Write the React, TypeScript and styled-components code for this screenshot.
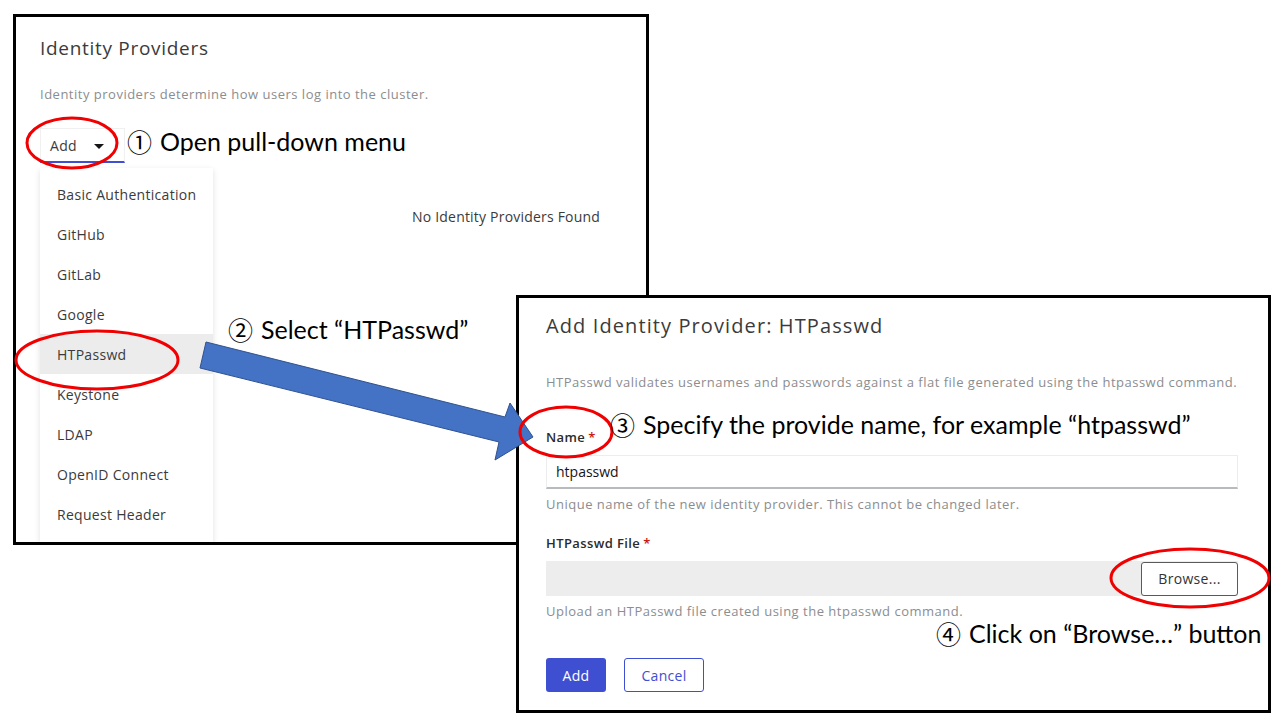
import React from "react";
import styled, { createGlobalStyle } from "styled-components";

const GlobalStyle = createGlobalStyle`
    html, body {
        margin: 0;
        padding: 0;
        background: #ffffff;
    }
    * {
        box-sizing: border-box;
    }
`;

const providers = [
    "Basic Authentication",
    "GitHub",
    "GitLab",
    "Google",
    "HTPasswd",
    "Keystone",
    "LDAP",
    "OpenID Connect",
    "Request Header",
];

const ui = `"Open Sans", "Liberation Sans", Arial, sans-serif`;
const note = `Lato, "Open Sans", sans-serif`;

const Step: React.FC<{ n: string; left: number; top: number; children: React.ReactNode }> = ({ n, left, top, children }) => (
    <Callout left={left} top={top}>
        <StepNumber>{n}</StepNumber>
        {children}
    </Callout>
);

const App: React.FC = () => {
    return (
        <Page>
            <GlobalStyle />

            <Window left={13} top={14} width={636} height={531}>
                <Title>Identity Providers</Title>
                <Description>Identity providers determine how users log into the cluster.</Description>
                <Toggle>
                    <span>Add</span>
                    <Caret />
                </Toggle>
                <EmptyState>No Identity Providers Found</EmptyState>
                <Menu>
                    {providers.map(name => (
                        <MenuItem key={name} $active={name === "HTPasswd"}>{name}</MenuItem>
                    ))}
                </Menu>
            </Window>

            <Window left={516} top={295} width={755} height={418} $wide>
                <Title $size={20}>Add Identity Provider: HTPasswd</Title>
                <Description $gap={35}>
                    HTPasswd validates usernames and passwords against a flat file generated using the htpasswd command.
                </Description>
                <Label $gap={37}>Name<Required>*</Required></Label>
                <TextInput>htpasswd</TextInput>
                <Helper>Unique name of the new identity provider. This cannot be changed later.</Helper>
                <Label $gap={21}>HTPasswd File<Required>*</Required></Label>
                <FileBar>
                    <BrowseButton>Browse...</BrowseButton>
                </FileBar>
                <Helper>Upload an HTPasswd file created using the htpasswd command.</Helper>
                <Actions>
                    <PrimaryButton>Add</PrimaryButton>
                    <SecondaryButton>Cancel</SecondaryButton>
                </Actions>
            </Window>

            <Overlay viewBox="0 0 1282 726" width={1282} height={726}>
                <polygon
                    points="206,342 505,417 510,403 533,437 495,460 499,442 200,368"
                    fill="#4472c4"
                    stroke="#2f528f"
                    strokeWidth={1}
                />
                <ellipse cx={72} cy={143} rx={45} ry={25} fill="none" stroke="#f00000" strokeWidth={3} />
                <ellipse cx={97} cy={360} rx={81} ry={29} fill="none" stroke="#f00000" strokeWidth={3} />
                <ellipse cx={566} cy={432} rx={46} ry={25} fill="none" stroke="#f00000" strokeWidth={3} />
                <ellipse cx={1190} cy={578} rx={79} ry={29} fill="none" stroke="#f00000" strokeWidth={3} />
            </Overlay>

            <Step n="①" left={127} top={128}>Open pull-down menu</Step>
            <Step n="②" left={228} top={316}>Select “HTPasswd”</Step>
            <Step n="③" left={610} top={411}>Specify the provide name, for example “htpasswd”</Step>
            <Step n="④" left={936} top={620}>Click on “Browse…” button</Step>
        </Page>
    );
};

const Page = styled.div`
    position: relative;
    width: 1282px;
    height: 726px;
    overflow: hidden;
    background: #ffffff;
    font-family: ${ui};
`;

const Window = styled.section<{ left: number; top: number; width: number; height: number; $wide?: boolean }>`
    position: absolute;
    left: ${p => p.left}px;
    top: ${p => p.top}px;
    width: ${p => p.width}px;
    height: ${p => p.height}px;
    border: 3px solid #000000;
    background: #ffffff;
    overflow: hidden;
    display: flex;
    flex-direction: column;
    align-items: flex-start;
    padding: ${p => (p.$wide ? "16px 30px 0 27px" : "19px 24px 0 24px")};
`;

const Title = styled.h1<{ $size?: number }>`
    margin: 0;
    font-size: ${p => p.$size ?? 19}px;
    line-height: 24px;
    font-weight: 400;
    letter-spacing: ${p => (p.$size ? 1.1 : 0.7)}px;
    color: #3b3b3b;
`;

const Description = styled.p<{ $gap?: number }>`
    margin: ${p => p.$gap ?? 25}px 0 0;
    font-size: 13px;
    line-height: 18px;
    letter-spacing: 0.5px;
    color: #8b8d8f;
`;

const Toggle = styled.div`
    margin-top: 25px;
    width: 85px;
    height: 35px;
    padding: 0 20px 0 9px;
    display: flex;
    align-items: center;
    justify-content: space-between;
    border: 1px solid #f0f0f0;
    border-bottom: 2px solid #3f4fd1;
    font-size: 14px;
    letter-spacing: 0.3px;
    color: #3b3b3b;
`;

const Caret = styled.span`
    width: 0;
    height: 0;
    margin-top: 2px;
    border-left: 5px solid transparent;
    border-right: 5px solid transparent;
    border-top: 5px solid #151515;
`;

const EmptyState = styled.div`
    margin: 45px 0 0 372px;
    font-size: 14px;
    line-height: 18px;
    letter-spacing: 0.2px;
    color: #3b3b3b;
`;

const Menu = styled.ul`
    position: absolute;
    left: 24px;
    top: 151px;
    width: 173px;
    margin: 0;
    padding: 6px 0 8px;
    list-style: none;
    background: #ffffff;
    box-shadow: 0 2px 6px rgba(0, 0, 0, 0.12);
`;

const MenuItem = styled.li<{ $active?: boolean }>`
    height: 40px;
    padding-left: 17px;
    display: flex;
    align-items: center;
    font-size: 14px;
    letter-spacing: 0.3px;
    color: #3b3b3b;
    background: ${p => (p.$active ? "#ececec" : "transparent")};
`;

const Label = styled.div<{ $gap: number }>`
    margin-top: ${p => p.$gap}px;
    font-size: 13px;
    line-height: 18px;
    font-weight: 600;
    letter-spacing: 0.4px;
    color: #2b2b2b;
`;

const Required = styled.span`
    margin-left: 3px;
    color: #c9190b;
`;

const TextInput = styled.div`
    margin-top: 9px;
    width: 100%;
    height: 34px;
    padding: 0 9px;
    display: flex;
    align-items: center;
    border: 1px solid #ededed;
    border-bottom: 2px solid #b8bbbe;
    font-size: 14px;
    color: #151515;
`;

const Helper = styled.div`
    margin-top: 6px;
    font-size: 13px;
    line-height: 18px;
    letter-spacing: 0.5px;
    color: #8b8d8f;
`;

const FileBar = styled.div`
    margin-top: 9px;
    width: 100%;
    height: 35px;
    display: flex;
    justify-content: flex-end;
    align-items: center;
    background: #ededed;
`;

const BrowseButton = styled.button`
    width: 97px;
    height: 34px;
    background: #ffffff;
    border: 1px solid #5a5a5a;
    border-radius: 3px;
    font-family: ${ui};
    font-size: 14px;
    letter-spacing: 0.3px;
    color: #333333;
`;

const Actions = styled.div`
    margin-top: 38px;
    display: flex;
    gap: 18px;
`;

const PrimaryButton = styled.button`
    width: 60px;
    height: 34px;
    border: none;
    border-radius: 3px;
    background: #3f4fd1;
    color: #ffffff;
    font-family: ${ui};
    font-size: 14px;
    letter-spacing: 0.3px;
`;

const SecondaryButton = styled.button`
    width: 80px;
    height: 34px;
    border: 1px solid #3f4fd1;
    border-radius: 3px;
    background: #ffffff;
    color: #3f4fd1;
    font-family: ${ui};
    font-size: 14px;
    letter-spacing: 0.3px;
`;

const Overlay = styled.svg`
    position: absolute;
    left: 0;
    top: 0;
    pointer-events: none;
`;

const Callout = styled.div<{ left: number; top: number }>`
    position: absolute;
    left: ${p => p.left}px;
    top: ${p => p.top}px;
    display: flex;
    align-items: center;
    height: 26px;
    font-family: ${note};
    font-size: 25px;
    line-height: 26px;
    color: #000000;
    white-space: nowrap;
`;

const StepNumber = styled.span`
    width: 33px;
    font-family: "Noto Sans CJK JP", "DejaVu Sans", sans-serif;
    font-size: 25px;
    line-height: 26px;
`;

export default App;
